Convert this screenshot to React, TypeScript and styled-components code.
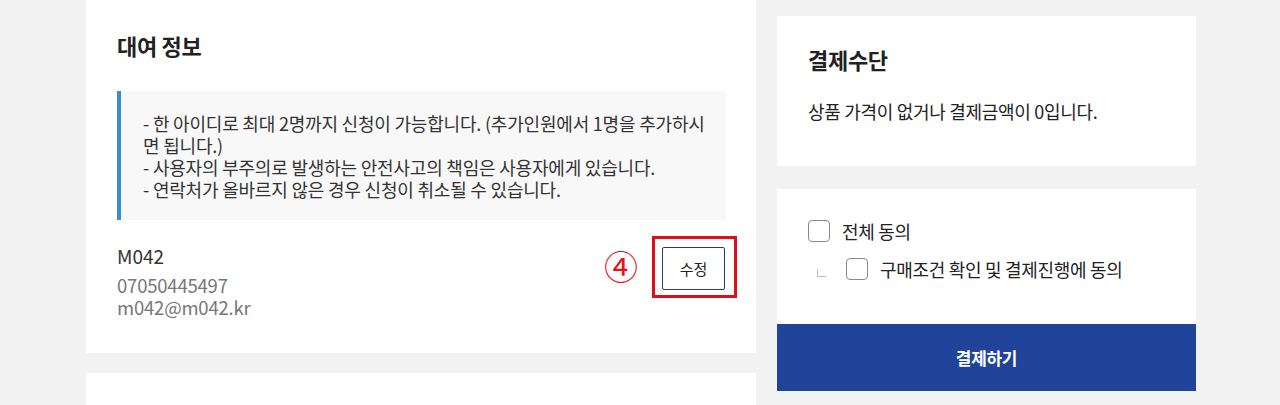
import * as React from 'react'
import styled, { createGlobalStyle } from 'styled-components'

const GlobalStyle = createGlobalStyle`
    html, body {
        margin: 0;
        padding: 0;
        background: #f2f2f2;
        overflow: hidden;
    }
    body {
        font-family: "Noto Sans CJK KR", "Noto Sans", sans-serif;
        color: #222;
    }
`

const Page = styled.div`
    display: flex;
    align-items: flex-start;
    gap: 21px;
    padding-left: 86px;
    width: 1280px;
    height: 405px;
    box-sizing: border-box;
`

const LeftColumn = styled.div`
    width: 670px;
    display: flex;
    flex-direction: column;
    gap: 20px;
`

const RightColumn = styled.div`
    width: 419px;
    display: flex;
    flex-direction: column;
    gap: 23px;
    padding-top: 16px;
`

const Card = styled.section<{ $height?: number }>`
    background: #fff;
    box-sizing: border-box;
    padding: 0 30px 0 31px;
    height: ${(p) => (p.$height ? `${p.$height}px` : 'auto')};
`

const SectionTitle = styled.h2<{ $top: number }>`
    margin: ${(p) => p.$top}px 0 0;
    font-size: 22px;
    line-height: 28px;
    font-weight: 700;
    color: #222;
    letter-spacing: -0.3px;
`

const Notice = styled.div`
    margin-top: 32px;
    background: #f8f8f8;
    border-left: 4px solid #3a8dd0;
    padding: 21px 10px 20px 22px;
    font-size: 18px;
    line-height: 22px;
    color: #333;
    letter-spacing: -0.2px;
    word-break: keep-all;
`

const UserRow = styled.div`
    margin-top: 24px;
    display: flex;
    align-items: flex-start;
    justify-content: space-between;
`

const UserInfo = styled.div`
    display: flex;
    flex-direction: column;
`

const UserName = styled.div`
    font-size: 19px;
    line-height: 24px;
    color: #333;
    margin-bottom: 6px;
`

const UserSub = styled.div`
    font-size: 18.5px;
    line-height: 22px;
    color: #777;
    letter-spacing: -0.2px;
`

const Actions = styled.div`
    display: flex;
    align-items: center;
    gap: 14px;
    margin-top: -8px;
    margin-right: -11px;
`

const StepMark = styled.span`
    color: #e0141e;
    font-size: 34px;
    line-height: 34px;
    font-family: "DejaVu Serif", "Noto Sans CJK KR", serif;
    margin-top: 2px;
`

const Highlight = styled.div`
    border: 3px solid #dc0f1d;
    padding: 8px 9px 5px 7px;
`

const EditButton = styled.button`
    width: 63px;
    height: 43px;
    background: #fff;
    border: 1px solid #2b3a6b;
    border-radius: 2px;
    font-family: inherit;
    font-size: 15px;
    color: #222;
    cursor: pointer;
`

const PayText = styled.p`
    margin: 26px 0 0;
    font-size: 18px;
    line-height: 24px;
    color: #222;
    letter-spacing: -0.3px;
`

const AgreeBox = styled.div`
    background: #fff;
    display: flex;
    flex-direction: column;
`

const AgreeList = styled.div`
    padding: 31px 30px 44px 31px;
    display: flex;
    flex-direction: column;
    gap: 16px;
`

const AgreeRow = styled.label<{ $indent?: boolean }>`
    display: flex;
    align-items: center;
    gap: 12px;
    padding-left: ${(p) => (p.$indent ? '9px' : '0')};
    font-size: 18px;
    line-height: 22px;
    color: #222;
    letter-spacing: -0.3px;
    cursor: pointer;
`

const Corner = styled.span`
    width: 8px;
    height: 7px;
    border-left: 1px solid #bbb;
    border-bottom: 1px solid #bbb;
    margin-top: 8px;
    margin-right: 8px;
`

const Check = styled.span`
    width: 22px;
    height: 22px;
    box-sizing: border-box;
    border: 1.5px solid #8a8a8a;
    border-radius: 4px;
    background: #fff;
    flex-shrink: 0;
`

const PayButton = styled.button`
    height: 67px;
    border: none;
    background: #21449a;
    color: #fff;
    font-family: inherit;
    font-size: 17px;
    font-weight: 700;
    letter-spacing: -0.3px;
    cursor: pointer;
`

const App = () => {
    return (
        <>
            <GlobalStyle />
            <Page>
                <LeftColumn>
                    <Card $height={353}>
                        <SectionTitle $top={31}>대여 정보</SectionTitle>
                        <Notice>
                            - 한 아이디로 최대 2명까지 신청이 가능합니다. (추가인원에서 1명을 추가하시 면 됩니다.)
                            <br />
                            - 사용자의 부주의로 발생하는 안전사고의 책임은 사용자에게 있습니다.
                            <br />
                            - 연락처가 올바르지 않은 경우 신청이 취소될 수 있습니다.
                        </Notice>
                        <UserRow>
                            <UserInfo>
                                <UserName>M042</UserName>
                                <UserSub>07050445497</UserSub>
                                <UserSub>m042@m042.kr</UserSub>
                            </UserInfo>
                            <Actions>
                                <StepMark>④</StepMark>
                                <Highlight>
                                    <EditButton>수정</EditButton>
                                </Highlight>
                            </Actions>
                        </UserRow>
                    </Card>
                    <Card $height={100} />
                </LeftColumn>
                <RightColumn>
                    <Card $height={150}>
                        <SectionTitle $top={29}>결제수단</SectionTitle>
                        <PayText>상품 가격이 없거나 결제금액이 0입니다.</PayText>
                    </Card>
                    <AgreeBox>
                        <AgreeList>
                            <AgreeRow>
                                <Check />
                                전체 동의
                            </AgreeRow>
                            <AgreeRow $indent>
                                <Corner />
                                <Check />
                                구매조건 확인 및 결제진행에 동의
                            </AgreeRow>
                        </AgreeList>
                        <PayButton>결제하기</PayButton>
                    </AgreeBox>
                </RightColumn>
            </Page>
        </>
    )
}

export default App
